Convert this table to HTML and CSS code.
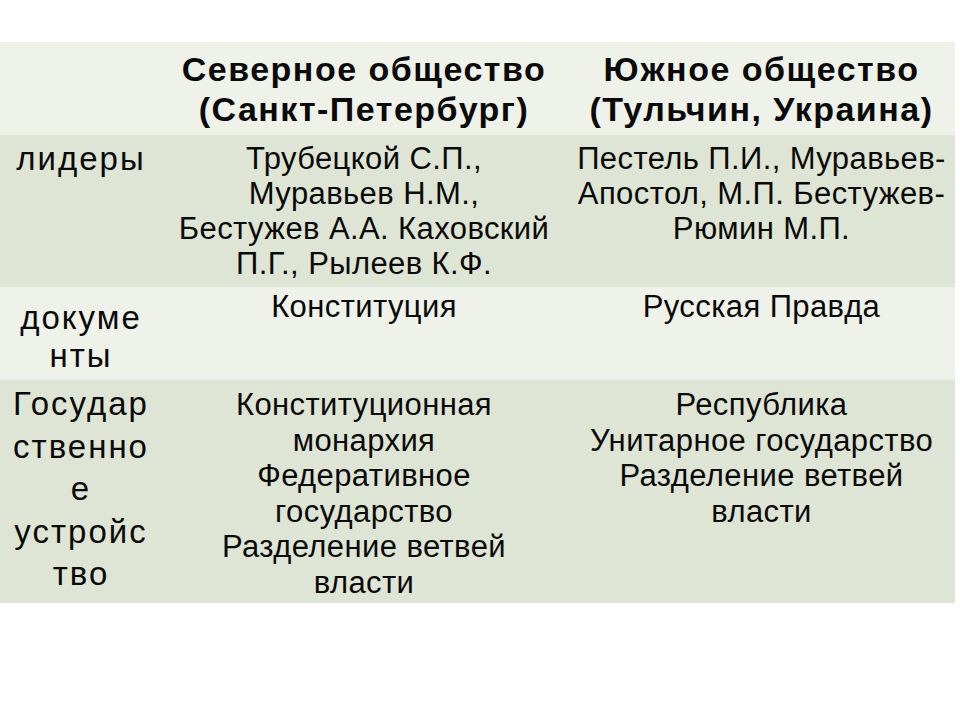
FILE: index.html
```html
<!DOCTYPE html>
<html lang="ru">
<head>
<meta charset="utf-8">
<link rel="stylesheet" href="styles.css">
</head>
<body>
<table class="grid">
  <colgroup>
    <col class="c1"><col class="c2"><col class="c3">
  </colgroup>
  <tr class="head light">
    <td></td>
    <td>Северное общество<br>(Санкт-Петербург)</td>
    <td>Южное общество<br>(Тульчин, Украина)</td>
  </tr>
  <tr class="dark r1">
    <td class="lab">лидеры</td>
    <td>Трубецкой С.П.,<br>Муравьев Н.М.,<br>Бестужев А.А. Каховский<br>П.Г., Рылеев К.Ф.</td>
    <td>Пестель П.И., Муравьев-<br>Апостол, М.П. Бестужев-<br>Рюмин М.П.</td>
  </tr>
  <tr class="light r2">
    <td class="lab">докуме<br>нты</td>
    <td>Конституция</td>
    <td>Русская Правда</td>
  </tr>
  <tr class="dark r3">
    <td class="lab">Государ<br>ственно<br>е<br>устройс<br>тво</td>
    <td>Конституционная<br>монархия<br>Федеративное<br>государство<br>Разделение ветвей<br>власти</td>
    <td>Республика<br>Унитарное государство<br>Разделение ветвей<br>власти</td>
  </tr>
</table>
</body>
</html>
```
FILE: styles.css
```css
html, body {
  margin: 0;
  padding: 0;
  background: #ffffff;
}
body {
  width: 960px;
  height: 720px;
  overflow: hidden;
  font-family: "Liberation Sans", Arial, sans-serif;
  color: #0a0a0a;
}
.grid {
  margin-top: 42px;
  width: 955px;
  border-collapse: collapse;
  table-layout: fixed;
}
.c1 { width: 160px; }
.c2 { width: 408px; }
.c3 { width: 387px; }
.grid td {
  padding: 0;
  vertical-align: top;
  text-align: center;
  font-size: 31px;
  line-height: 35px;
  letter-spacing: 0.4px;
  white-space: nowrap;
  box-sizing: border-box;
}
.light { background: #eff2e9; }
.dark { background: #dfe5d4; }
.head td {
  font-weight: bold;
  font-size: 34px;
  line-height: 40px;
  letter-spacing: 1.5px;
  height: 93px;
  padding-top: 7px;
}
.r1 td { height: 152px; padding-top: 6px; }
.r2 td { height: 93px; padding-top: 2px; }
.r3 td { height: 223px; padding-top: 7px; line-height: 35.5px; }
.grid td.lab {
  font-size: 33px;
  line-height: 41px;
  letter-spacing: 2px;
  padding-left: 2px;
}
.r1 td.lab { padding-top: 3px; }
.r2 td.lab { padding-top: 12px; line-height: 38px; }
.r3 td.lab { padding-top: 3px; line-height: 42.5px; }
```
